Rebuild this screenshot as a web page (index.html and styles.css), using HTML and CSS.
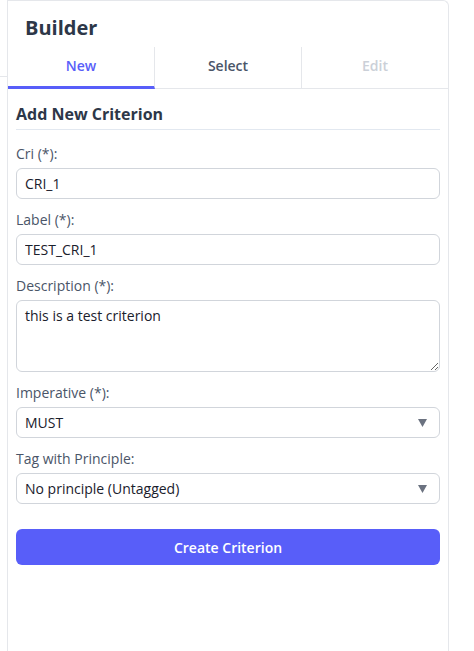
FILE: index.html
```html
<!DOCTYPE html>
<html lang="en">
<head>
<meta charset="utf-8">
<title>Builder</title>
<link rel="stylesheet" href="styles.css">
</head>
<body>
<div class="page">
  <div class="side"><div class="side-top"></div></div>
  <section class="panel">
    <header class="panel-head"><h1>Builder</h1></header>
    <nav class="tabs">
      <button class="tab active" type="button">New</button>
      <button class="tab" type="button">Select</button>
      <button class="tab disabled" type="button">Edit</button>
    </nav>
    <form class="form">
      <h2>Add New Criterion</h2>
      <div class="field">
        <label for="cri">Cri (*):</label>
        <input id="cri" class="control" type="text" value="CRI_1">
      </div>
      <div class="field">
        <label for="lbl">Label (*):</label>
        <input id="lbl" class="control" type="text" value="TEST_CRI_1">
      </div>
      <div class="field">
        <label for="desc">Description (*):</label>
        <textarea id="desc" class="control area">this is a test criterion</textarea>
      </div>
      <div class="field">
        <label for="imp">Imperative (*):</label>
        <div class="select">
          <select id="imp"><option>MUST</option></select>
          <svg class="arrow" width="9" height="8" viewBox="0 0 9 8"><path d="M0 0H9L4.5 8Z" fill="#6b7280"/></svg>
        </div>
      </div>
      <div class="field">
        <label for="tag">Tag with Principle:</label>
        <div class="select">
          <select id="tag"><option>No principle (Untagged)</option></select>
          <svg class="arrow" width="9" height="8" viewBox="0 0 9 8"><path d="M0 0H9L4.5 8Z" fill="#6b7280"/></svg>
        </div>
      </div>
      <button class="submit" type="button">Create Criterion</button>
    </form>
  </section>
</div>
</body>
</html>
```

FILE: styles.css
```css
html, body {
  margin: 0;
  padding: 0;
  background: #ffffff;
}
body {
  font-family: "Open Sans", "Noto Sans", sans-serif;
  color: #1a202c;
}
.page {
  display: flex;
  height: 651px;
  overflow: hidden;
}
.side {
  width: 7px;
  flex: none;
}
.side-top {
  height: 76px;
  border-bottom: 1px solid #e5e7eb;
}
.panel {
  width: 442px;
  flex: none;
  box-sizing: border-box;
  height: 100%;
  border: 1px solid #e5e7eb;
  border-bottom: none;
  border-top-right-radius: 6px;
}
.panel-head {
  padding: 15px 16px 7px 17px;
}
.panel-head h1 {
  margin: 0;
  font-size: 20px;
  line-height: 24px;
  font-weight: 700;
  color: #2d3748;
}
.tabs {
  display: flex;
}
.tab {
  flex: 1;
  height: 42px;
  box-sizing: border-box;
  margin: 0;
  padding: 0 0 5px;
  border: none;
  border-bottom: 1px solid #e5e7eb;
  border-right: 1px solid #e5e7eb;
  background: #ffffff;
  font-family: inherit;
  font-size: 14px;
  font-weight: 600;
  color: #4a5568;
}
.tab:last-child {
  border-right: none;
}
.tab.active {
  color: #585ef9;
  border-bottom: 3px solid #585ef9;
  padding-bottom: 3px;
}
.tab.disabled {
  color: #cbd0d8;
}
.form {
  padding: 15px 8px 0;
}
.form h2 {
  margin: 0 0 14px;
  padding-bottom: 5px;
  border-bottom: 1px solid #e2e8f0;
  font-size: 16px;
  line-height: 20px;
  font-weight: 700;
  color: #2d3748;
}
.field {
  margin-bottom: 11px;
}
.field label {
  display: block;
  margin-bottom: 4px;
  font-size: 14px;
  line-height: 20px;
  font-weight: 500;
  color: #4a5568;
}
.control {
  display: block;
  width: 100%;
  box-sizing: border-box;
  height: 31px;
  margin: 0;
  padding: 0 8px;
  border: 1px solid #d1d5db;
  border-radius: 6px;
  background: #ffffff;
  font-family: inherit;
  font-size: 14px;
  color: #1a202c;
  outline: none;
}
.control.area {
  height: 72px;
  padding: 5px 8px;
  line-height: 20px;
  resize: vertical;
}
.select {
  display: flex;
  align-items: center;
  height: 31px;
  box-sizing: border-box;
  padding: 0 12px 0 0;
  border: 1px solid #d1d5db;
  border-radius: 6px;
  background: #ffffff;
}
.select select {
  flex: 1;
  min-width: 0;
  height: 100%;
  padding: 0 8px;
  border: none;
  background: transparent;
  -webkit-appearance: none;
  appearance: none;
  font-family: inherit;
  font-size: 14px;
  color: #1a202c;
  outline: none;
}
.arrow {
  flex: none;
  display: block;
}
.submit {
  display: block;
  width: 100%;
  height: 36px;
  margin-top: 25px;
  border: none;
  border-radius: 6px;
  background: #585ef9;
  color: #ffffff;
  font-family: inherit;
  font-size: 14px;
  font-weight: 600;
}
```
